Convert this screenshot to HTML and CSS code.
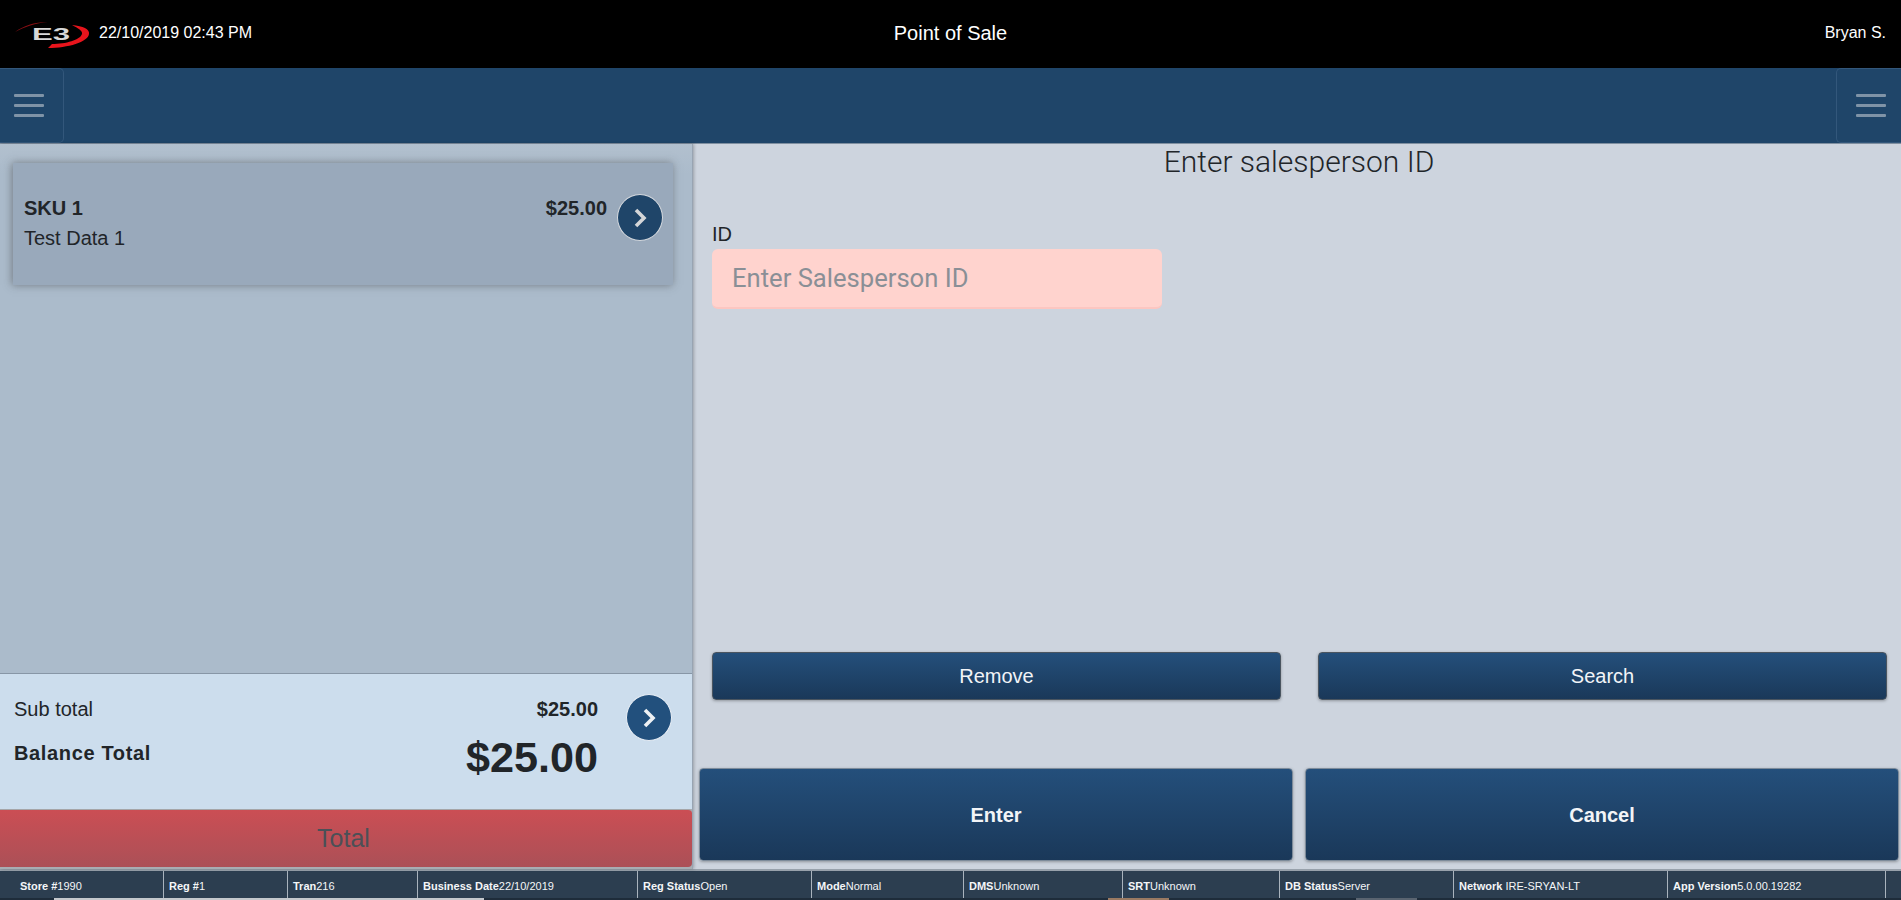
FILE: index.html
```html
<!DOCTYPE html>
<html lang="en">
<head>
    <meta charset="UTF-8">
    <meta name="viewport" content="width=device-width, initial-scale=1.0">
    <title>Point of Sale</title>
    <link rel="stylesheet" href="styles.css">
</head>
<body>
    <header class="top-bar">
        <div class="top-left">
            <svg class="logo" width="80" height="32" viewBox="0 0 80 32">
                <path d="M1 15 C9 9 20 5 34 5 C22 6 10 10 1 15 Z" fill="#8a0f14"/>
                <path d="M58 8 C69 9 76 12 75 17 C74 25 54 31 34 31 C36 29 37 28 38 27 C52 27 66 23 68 17 C69 14 64 11 58 8 Z" fill="#e8141c"/>
                <text class="logo-text" x="18" y="23" textLength="38" lengthAdjust="spacingAndGlyphs">E3</text>
            </svg>
            <span class="top-date">22/10/2019 02:43 PM</span>
        </div>
        <div class="top-title">Point of Sale</div>
        <div class="top-user">Bryan S.</div>
    </header>

    <nav class="nav-bar">
        <button class="menu-btn menu-left"><span></span><span></span><span></span></button>
        <button class="menu-btn menu-right"><span></span><span></span><span></span></button>
    </nav>

    <main class="content">
        <section class="left-panel">
            <div class="item-list">
                <div class="item-card">
                    <div class="item-info">
                        <div class="item-row">
                            <b class="item-sku">SKU 1</b>
                            <b class="item-price">$25.00</b>
                        </div>
                        <div class="item-desc">Test Data 1</div>
                    </div>
                    <button class="round-btn">
                        <svg width="16" height="20" viewBox="0 0 16 20"><path d="M4 2 L12 10 L4 18" fill="none" stroke="#d4d6d8" stroke-width="3.6"/></svg>
                    </button>
                </div>
            </div>
            <div class="totals">
                <div class="totals-text">
                    <div class="sub-row">
                        <span>Sub total</span>
                        <b>$25.00</b>
                    </div>
                    <div class="balance-row">
                        <b class="balance-label">Balance Total</b>
                        <b class="balance-value">$25.00</b>
                    </div>
                </div>
                <button class="round-btn round-light">
                    <svg width="16" height="20" viewBox="0 0 16 20"><path d="M4 2 L12 10 L4 18" fill="none" stroke="#eef1f4" stroke-width="3.6"/></svg>
                </button>
            </div>
            <button class="total-btn">Total</button>
        </section>

        <section class="right-panel">
            <h1 class="prompt">Enter salesperson ID</h1>
            <div class="field">
                <label class="field-label" for="sp-id">ID</label>
                <input class="field-input" id="sp-id" type="text" placeholder="Enter Salesperson ID">
            </div>
            <div class="small-actions">
                <button class="blue-btn small-btn">Remove</button>
                <button class="blue-btn small-btn">Search</button>
            </div>
            <div class="big-actions">
                <button class="blue-btn big-btn">Enter</button>
                <button class="blue-btn big-btn">Cancel</button>
            </div>
        </section>
    </main>

    <footer class="status-bar">
        <div class="status-cells">
            <div class="status-cell first"><b>Store #</b>1990</div>
            <div class="status-cell"><b>Reg #</b>1</div>
            <div class="status-cell"><b>Tran</b>216</div>
            <div class="status-cell"><b>Business Date</b>22/10/2019</div>
            <div class="status-cell"><b>Reg Status</b>Open</div>
            <div class="status-cell"><b>Mode</b>Normal</div>
            <div class="status-cell"><b>DMS</b>Unknown</div>
            <div class="status-cell"><b>SRT</b>Unknown</div>
            <div class="status-cell"><b>DB Status</b>Server</div>
            <div class="status-cell"><b>Network</b> IRE-SRYAN-LT</div>
            <div class="status-cell"><b>App Version</b>5.0.00.19282</div>
            <div class="status-cell"></div>
        </div>
        <div class="status-strip">
            <span class="strip-light"></span>
            <span class="strip-brown"></span>
            <span class="strip-grey"></span>
        </div>
    </footer>
</body>
</html>
```

FILE: styles.css
```css
* {
    box-sizing: border-box;
}

html, body {
    height: 100%;
}

body {
    margin: 0;
    height: 900px;
    overflow: hidden;
    display: flex;
    flex-direction: column;
    font-family: "Liberation Sans", Arial, sans-serif;
    color: #212529;
    background: #cdd4de;
}

button {
    font-family: inherit;
    cursor: pointer;
}

/* top black bar */
.top-bar {
    height: 68px;
    flex: none;
    background: #000;
    color: #fff;
    display: grid;
    grid-template-columns: 1fr 1fr 1fr;
    align-items: center;
}

.top-left {
    display: flex;
    align-items: center;
    padding-left: 14px;
    margin-top: -2px;
}

.logo-text {
    font-family: "Liberation Sans", Arial, sans-serif;
    font-weight: bold;
    font-size: 17px;
    fill: #d8d8d8;
}

.top-date {
    font-size: 16px;
    margin-left: 5px;
}

.top-title {
    text-align: center;
    font-size: 20px;
    margin-top: -2px;
}

.top-user {
    text-align: right;
    font-size: 16px;
    padding-right: 15px;
    margin-top: -3px;
}

/* nav */
.nav-bar {
    height: 76px;
    flex: none;
    background: #1f4569;
    border-bottom: 1px solid #7f8fa0;
    display: flex;
    justify-content: space-between;
}

.menu-btn {
    width: 64px;
    height: 75px;
    padding: 0 0 0 14px;
    background: transparent;
    border: 1px solid #33577b;
    display: flex;
    flex-direction: column;
    justify-content: center;
    gap: 7px;
}

.menu-left {
    border-left: 0;
    border-radius: 0 5px 5px 0;
}

.menu-right {
    border-right: 0;
    border-radius: 5px 0 0 5px;
    padding-left: 19px;
    width: 65px;
}

.menu-btn span {
    display: block;
    width: 30px;
    height: 3px;
    background: #7f93a7;
    border-radius: 1px;
}

.content {
    flex: 1;
    min-height: 0;
    display: flex;
}

/* left side */
.left-panel {
    width: 693px;
    flex: none;
    display: flex;
    flex-direction: column;
    padding-bottom: 2px;
    background: #a8adb3;
    border-right: 1px solid #98a4b2;
    box-shadow: 1px 0 3px rgba(0, 0, 0, 0.25);
    position: relative;
}

.item-list {
    flex: 1;
    padding: 19px 19px 0 13px;
    background: linear-gradient(to bottom, #b2c0ce, #abbbcb 30px);
}

.item-card {
    height: 122px;
    background: #99a9bb;
    box-shadow: -1px 0 8px rgba(60, 60, 60, 0.5);
    display: flex;
    padding: 31px 10px 0 11px;
    gap: 10px;
}

.item-info {
    flex: 1;
    padding-top: 2px;
}

.item-row {
    display: flex;
    justify-content: space-between;
    font-size: 20px;
    line-height: 24px;
}

.item-desc {
    font-size: 20px;
    line-height: 24px;
    margin-top: 6px;
}

.round-btn {
    width: 46px;
    height: 47px;
    flex: none;
    padding: 0;
    border-radius: 50%;
    background: #1f4569;
    border: 1px solid #d5d9de;
    display: flex;
    align-items: center;
    justify-content: center;
}

.round-light {
    background: #22507d;
    border-color: #e8eef5;
    margin-top: 20px;
}

.totals {
    height: 136px;
    flex: none;
    background: #ccdded;
    border-top: 1px solid #8796a6;
    display: flex;
    padding: 0 20px 0 14px;
    gap: 28px;
}

.totals-text {
    flex: 1;
}

.sub-row {
    display: flex;
    justify-content: space-between;
    font-size: 20px;
    line-height: 24px;
    margin-top: 23px;
}

.balance-row {
    display: flex;
    justify-content: space-between;
    align-items: center;
    margin-top: 10px;
}

.balance-label {
    font-size: 20px;
    letter-spacing: 0.65px;
    margin-top: -7px;
}

.balance-value {
    font-size: 43.2px;
    line-height: 52px;
}

.total-btn {
    height: 58px;
    flex: none;
    width: 100%;
    padding: 0 5px 0 0;
    border: 0;
    border-top: 1px solid #a5a5a8;
    border-radius: 0 4px 4px 0;
    background: linear-gradient(to bottom, #cb4e54, #ab5057);
    color: #4b5057;
    font-size: 25px;
}

/* right side */
.right-panel {
    flex: 1;
    min-width: 0;
    display: flex;
    flex-direction: column;
}

.prompt {
    margin: 0;
    padding-left: 4px;
    text-align: center;
    font-family: Roboto, sans-serif;
    font-weight: 300;
    font-size: 30px;
    line-height: 36px;
}

.field {
    width: 450px;
    margin: 42px 0 0 19px;
}

.field-label {
    display: block;
    font-size: 20px;
    line-height: 24px;
}

.field-input {
    display: block;
    width: 100%;
    height: 60px;
    margin-top: 3px;
    padding: 0 20px;
    border: 0;
    border-bottom: 2px solid #fcc6c1;
    border-radius: 6px;
    background: #ffd3ce;
    font-family: Roboto, sans-serif;
    font-size: 25.6px;
    color: #495057;
}

.field-input::placeholder {
    color: #8a8f96;
    opacity: 1;
}

.small-actions {
    margin-top: auto;
    display: flex;
    gap: 37px;
    padding: 0 14px 0 19px;
}

.blue-btn {
    flex: 1;
    border: 1px solid #3d5f80;
    border-radius: 4px;
    background: linear-gradient(to bottom, #244f7b, #1a3859);
    color: #f2f4f7;
    box-shadow: 0 1px 3px rgba(0, 0, 0, 0.3);
}

.small-btn {
    height: 48px;
    font-size: 20px;
    border-color: #4a5560;
}

.big-actions {
    margin-top: 68px;
    display: flex;
    gap: 12px;
    padding: 0 2px 0 6px;
    margin-bottom: 8px;
}

.big-btn {
    height: 93px;
    padding-top: 3px;
    font-size: 20px;
    font-weight: bold;
    border-color: #7d8b9a;
}

/* status bar */
.status-bar {
    height: 31px;
    flex: none;
    border-top: 2px solid #98a1ab;
    background: #2c3e50;
    color: #f4f6f8;
    display: flex;
    flex-direction: column;
    font-size: 11px;
}

.status-cells {
    flex: 1;
    min-height: 0;
    display: grid;
    grid-template-columns: 164px 124px 130px 220px 174px 152px 159px 157px 174px 214px 218px 15px;
}

.status-cell {
    border-right: 1px solid #a9b3bd;
    padding-left: 5px;
    line-height: 30px;
    white-space: nowrap;
    overflow: hidden;
}

.status-cell.first {
    padding-left: 20px;
}

.status-cell:last-child {
    border-right: 0;
}

.status-strip {
    height: 2px;
    flex: none;
    display: flex;
    background: #1e2c3a;
}

.strip-light {
    width: 430px;
    margin-left: 54px;
    background: #c4c8cc;
}

.strip-brown {
    width: 61px;
    margin-left: 624px;
    background: #9a7a62;
}

.strip-grey {
    width: 61px;
    margin-left: 187px;
    background: #5a6470;
}
```
